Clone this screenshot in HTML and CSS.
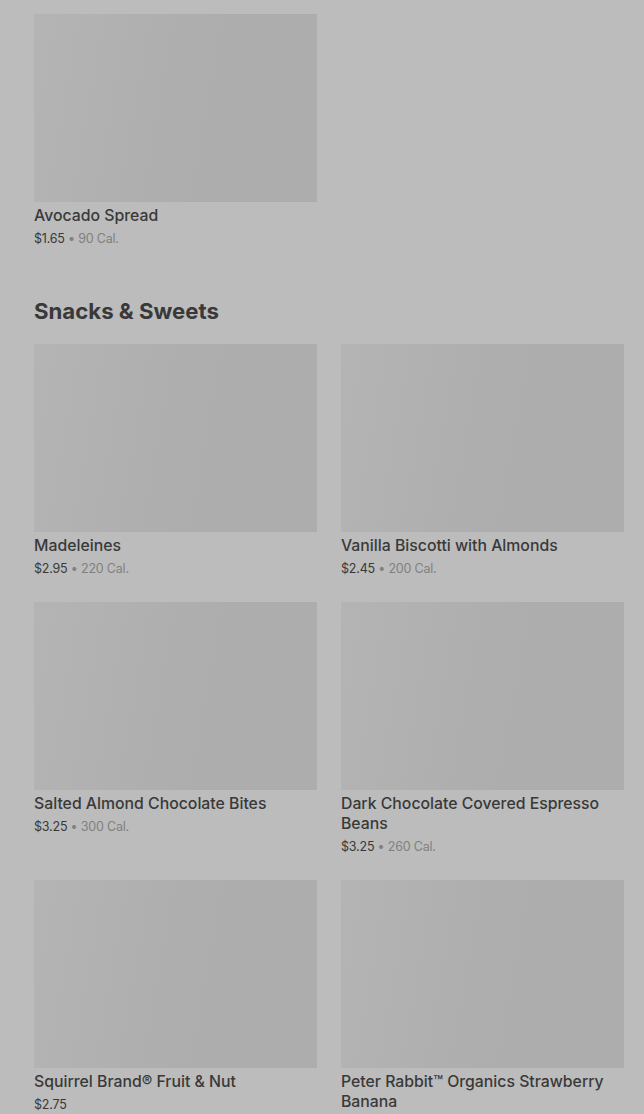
FILE: index.html
```html
<!DOCTYPE html>
<html lang="en">
<head>
  <meta charset="UTF-8" />
  <meta name="viewport" content="width=device-width, initial-scale=1.0" />
  <title>Menu</title>
  <link rel="stylesheet" href="styles.css">
</head>
<body>
  <div class="menu">
    <div class="grid first">
      <div class="item">
        <div class="thumb"></div>
        <div class="name">Avocado Spread</div>
        <div class="meta"><span class="price">$1.65</span> • 90 Cal.</div>
      </div>
    </div>

    <h2 class="section-title">Snacks &amp; Sweets</h2>

    <div class="grid">
      <div class="item">
        <div class="thumb"></div>
        <div class="name">Madeleines</div>
        <div class="meta"><span class="price">$2.95</span> • 220 Cal.</div>
      </div>
      <div class="item">
        <div class="thumb"></div>
        <div class="name">Vanilla Biscotti with Almonds</div>
        <div class="meta"><span class="price">$2.45</span> • 200 Cal.</div>
      </div>
      <div class="item">
        <div class="thumb"></div>
        <div class="name">Salted Almond Chocolate Bites</div>
        <div class="meta"><span class="price">$3.25</span> • 300 Cal.</div>
      </div>
      <div class="item">
        <div class="thumb"></div>
        <div class="name">Dark Chocolate Covered Espresso Beans</div>
        <div class="meta"><span class="price">$3.25</span> • 260 Cal.</div>
      </div>
      <div class="item">
        <div class="thumb"></div>
        <div class="name">Squirrel Brand® Fruit &amp; Nut</div>
        <div class="meta"><span class="price">$2.75</span></div>
      </div>
      <div class="item">
        <div class="thumb"></div>
        <div class="name">Peter Rabbit™ Organics Strawberry Banana</div>
      </div>
    </div>
  </div>
</body>
</html>
```

FILE: styles.css
```css
:root {
  --bg: #bcbcbc;
  --thumb-a: #b4b4b4;
  --thumb-b: #adadad;
  --title: #393939;
  --price: #383838;
  --muted: #808080;
}

body {
  margin: 0;
  background-color: var(--bg);
  font-family: Inter, 'Noto Sans', sans-serif;
  color: var(--title);
  overflow: hidden;
}

.menu {
  padding: 14px 20px 0 34px;
}

.grid {
  display: grid;
  grid-template-columns: 283px 283px;
  column-gap: 24px;
  row-gap: 24px;
}

.grid.first {
  margin-bottom: 49px;
}

.thumb {
  height: 188px;
  background: linear-gradient(100deg, var(--thumb-a) 0%, var(--thumb-b) 60%);
}

.name {
  margin-top: 4px;
  font-size: 15.8px;
  line-height: 20px;
  font-weight: 500;
  color: var(--title);
}

.meta {
  margin-top: 2px;
  padding-top: 1px;
  font-size: 12.5px;
  line-height: 19px;
  letter-spacing: -0.2px;
  color: var(--muted);
}

.price {
  color: var(--price);
}

.section-title {
  margin: 0 0 19px;
  font-size: 22.2px;
  line-height: 28px;
  font-weight: 700;
  color: var(--title);
}
```
